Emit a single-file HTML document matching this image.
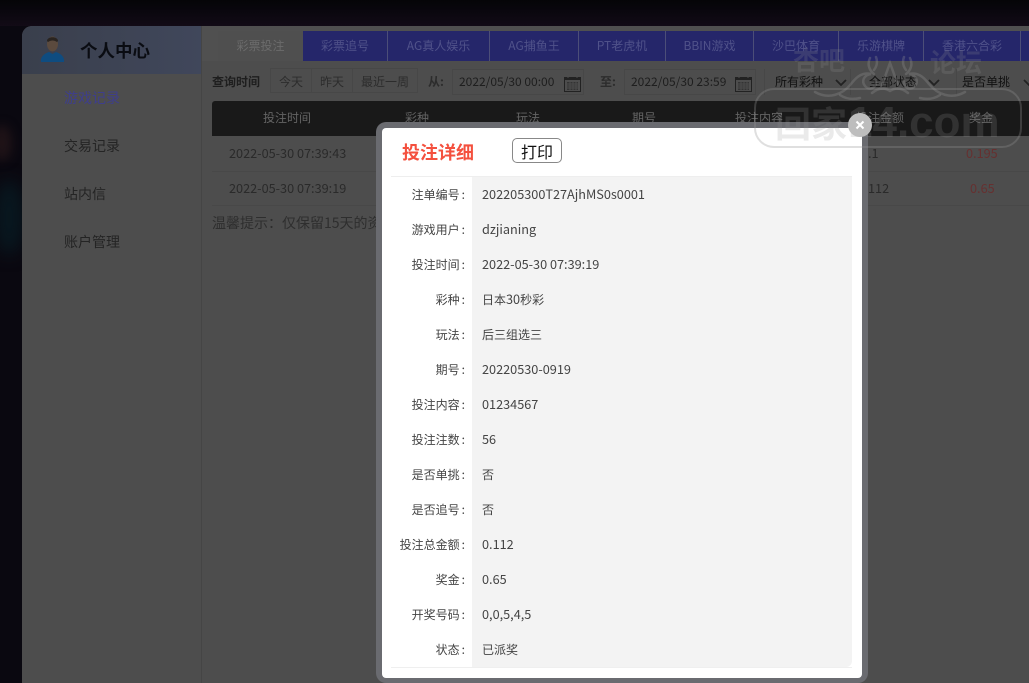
<!DOCTYPE html>
<html><head><meta charset="utf-8">
<style>
html,body{margin:0;padding:0;width:1029px;height:683px;overflow:hidden;background:#0a0810}
*{box-sizing:border-box}
body{position:relative;font-family:"Noto Sans CJK SC","Liberation Sans",sans-serif;}
.a{position:absolute;white-space:nowrap;line-height:1}
.tab{position:absolute;top:31px;height:30px;background:#25266a;color:#50528a;font-size:12px;text-align:center;line-height:30px;border-right:1px solid #4c4e78}
.b{color:#1e1e1e}
.th{position:absolute;top:101px;color:#646464;font-size:12px;line-height:34px;white-space:nowrap;transform:translateX(-50%)}
.lab{position:absolute;left:391px;width:74px;text-align:right;font-size:12px;color:#444;line-height:35px;white-space:nowrap}
.lab i{font-style:normal;margin-left:2px}
.val{position:absolute;left:482px;font-size:12px;color:#444;line-height:35px;white-space:nowrap}
.val b{font-weight:400;font-size:12.700px;line-height:1}
.sel{position:absolute;top:69px;height:26px;font-size:12px;color:#111;line-height:25px}
.nav{position:absolute;left:64px;font-size:14px;line-height:16px;color:#242424;white-space:nowrap}
.wm{color:rgba(150,150,150,.2);font-weight:700}
</style></head><body>
<div class="a" style="left:0;top:0;width:1029px;height:26px;background:linear-gradient(#050507 0,#08060c 8px,#120b16 26px)"></div>
<div class="a" style="left:0;top:26px;width:22px;height:657px;background:#0a0810"></div>
<div class="a" style="left:-8px;top:125px;width:20px;height:36px;border-radius:50%;background:#1f1317;filter:blur(5px)"></div>
<div class="a" style="left:-6px;top:180px;width:30px;height:75px;border-radius:50%;background:#08171f;filter:blur(8px)"></div>

<!-- panel -->
<div class="a" style="left:22px;top:26px;width:1007px;height:657px;background:#4d4d4d;border-top-left-radius:10px;overflow:hidden"></div>
<div class="a" style="left:22px;top:26px;width:180px;height:48px;background:linear-gradient(90deg,#3a3f4c,#40475b);border-top-left-radius:10px"></div>
<div class="a" style="left:201px;top:26px;width:1px;height:657px;background:#454545"></div>
<svg class="a" style="left:38px;top:33px" width="30" height="30" viewBox="0 0 30 30">
<ellipse cx="14.500" cy="11" rx="5.500" ry="7.500" fill="#5b4a3e"/><path d="M9 8c0-5 11-5 11 0l-1 1c-3-2-6-2-9 0z" fill="#2a2420"/>
<path d="M3 29c-1-6 5-9 8-10l3.500 2 3.500-2c3 1 9 4 8 10z" fill="#0f4c80"/></svg>
<div class="a" style="left:80px;top:42px;font-size:17.500px;font-weight:700;color:#0a0c12;line-height:18px">个人中心</div>
<div class="nav" style="top:90px;color:#3e3e8c">游戏记录</div>
<div class="nav" style="top:138px">交易记录</div>
<div class="nav" style="top:186px">站内信</div>
<div class="nav" style="top:234px">账户管理</div>

<!-- tabs -->
<div class="a" style="left:202px;top:26px;width:827px;height:35px;background:#505050"></div>
<div class="a" style="left:218px;top:31px;width:85px;height:30px;background:#4f4f4f;color:#6b6b6b;font-size:12px;text-align:center;line-height:30px">彩票投注</div>
<div class="tab" style="left:303px;width:85px">彩票追号</div>
<div class="tab" style="left:388px;width:102px">AG真人娱乐</div>
<div class="tab" style="left:490px;width:89px">AG捕鱼王</div>
<div class="tab" style="left:579px;width:87px">PT老虎机</div>
<div class="tab" style="left:666px;width:88px">BBIN游戏</div>
<div class="tab" style="left:754px;width:85px">沙巴体育</div>
<div class="tab" style="left:839px;width:85px">乐游棋牌</div>
<div class="tab" style="left:924px;width:97px">香港六合彩</div>
<div class="tab" style="left:1021px;width:8px;border:0"></div>

<!-- filter -->
<div class="a" style="left:212px;top:75px;font-size:12px;font-weight:700;color:#1e1e1e;line-height:14px">查询时间</div>
<div class="a" style="left:270px;top:68px;width:148px;height:25px;border:1px solid #474747"></div>
<div class="a" style="left:311px;top:68px;width:1px;height:25px;background:#474747"></div>
<div class="a" style="left:352px;top:68px;width:1px;height:25px;background:#474747"></div>
<div class="a b" style="left:279px;top:75px;font-size:12px;line-height:14px;color:#2c2c2c">今天</div>
<div class="a b" style="left:320px;top:75px;font-size:12px;line-height:14px;color:#2c2c2c">昨天</div>
<div class="a b" style="left:361px;top:75px;font-size:12px;line-height:14px;color:#2c2c2c">最近一周</div>
<div class="a" style="left:428px;top:75px;font-size:12px;font-weight:700;color:#2c2c2c;line-height:14px">从:</div>
<div class="a" style="left:452px;top:69px;width:132px;height:26px;border:1px solid #474747"></div>
<div class="a" style="left:459px;top:75px;font-size:12px;color:#1e1e1e;line-height:14px">2022/05/30 00:00</div>
<div class="a" style="left:600px;top:75px;font-size:12px;font-weight:700;color:#2c2c2c;line-height:14px">至:</div>
<div class="a" style="left:624px;top:69px;width:132px;height:26px;border:1px solid #474747"></div>
<div class="a" style="left:631px;top:75px;font-size:12px;color:#1e1e1e;line-height:14px">2022/05/30 23:59</div>
<svg class="a" style="left:564px;top:74px" width="17" height="18" viewBox="0 0 17 18"><path d="M.5 3.500h16v14H.5z" fill="none" stroke="#222"/><path d="M1 3h15v3H1z" fill="#222"/><path d="M3 8h11v8H3z" fill="#333"/><path d="M4 1v3M13 1v3M3 10h11M3 12h11M3 14h11M6 8v8M9 8v8M12 8v8" stroke="#4d4d4d"/></svg>
<svg class="a" style="left:735px;top:74px" width="17" height="18" viewBox="0 0 17 18"><path d="M.5 3.500h16v14H.5z" fill="none" stroke="#222"/><path d="M1 3h15v3H1z" fill="#222"/><path d="M3 8h11v8H3z" fill="#333"/><path d="M4 1v3M13 1v3M3 10h11M3 12h11M3 14h11M6 8v8M9 8v8M12 8v8" stroke="#4d4d4d"/></svg>
<div class="sel" style="left:775px">所有彩种</div>
<div class="sel" style="left:869px">全部状态</div>
<div class="sel" style="left:962px">是否单挑</div>
<svg class="a" style="left:830px;top:79px" width="199" height="8" viewBox="0 0 199 8"><path d="M6 1l5 5 5-5M99 1l5 5 5-5M194 1l5 5 5-5" fill="none" stroke="#222" stroke-width="1.800"/></svg>
<div class="a" style="left:764px;top:69px;width:1px;height:26px;background:#474747"></div>
<div class="a" style="left:850px;top:69px;width:1px;height:26px;background:#474747"></div>
<div class="a" style="left:956px;top:69px;width:1px;height:26px;background:#474747"></div>

<!-- table -->
<div class="a" style="left:212px;top:101px;width:817px;height:35px;background:#191919;border-top-left-radius:3px"></div>
<div class="th" style="left:287px">投注时间</div>
<div class="th" style="left:417px">彩种</div>
<div class="th" style="left:528px">玩法</div>
<div class="th" style="left:644px">期号</div>
<div class="th" style="left:759px">投注内容</div>
<div class="th" style="left:880px">投注金额</div>
<div class="th" style="left:981px">奖金</div>
<div class="a" style="left:212px;top:171px;width:817px;height:1px;background:#484848"></div>
<div class="a" style="left:212px;top:205px;width:817px;height:1px;background:#484848"></div>
<div class="a" style="left:229px;top:146px;font-size:12.700px;color:#2a2a2a;line-height:14px">2022-05-30 07:39:43</div>
<div class="a" style="left:229px;top:181px;font-size:12.700px;color:#2a2a2a;line-height:14px">2022-05-30 07:39:19</div>
<div class="a" style="left:868px;top:146px;font-size:12.700px;color:#2a2a2a;line-height:14px">.1</div>
<div class="a" style="left:868px;top:181px;font-size:12.700px;color:#2a2a2a;line-height:14px">112</div>
<div class="a" style="left:966px;top:146px;font-size:12.700px;color:#663030;line-height:14px">0.195</div>
<div class="a" style="left:970px;top:181px;font-size:12.700px;color:#663030;line-height:14px">0.65</div>
<div class="a" style="left:212px;top:215px;font-size:14px;color:#2e2e2e;line-height:16px">温馨提示：仅保留15天的资</div>

<!-- modal -->
<div class="a" style="left:376px;top:122px;width:492px;height:561px;background:#6a6b70;border-radius:10px"></div>
<div class="a" style="left:382px;top:128px;width:480px;height:550px;background:#fff;border-radius:4px"></div>
<div class="a" style="left:402px;top:143px;font-size:18px;font-weight:700;color:#f4503e;line-height:19px">投注详细</div>
<div class="a" style="left:512px;top:138px;width:50px;height:25px;border:1px solid #888;border-radius:5px;background:#fff;color:#111;font-size:16px;line-height:24px;text-align:center">打印</div>
<div class="a" style="left:391px;top:176px;width:461px;height:1px;background:#eeeeee"></div>
<div class="a" style="left:472px;top:177px;width:380px;height:490px;background:#f3f3f3;border-bottom-right-radius:6px"></div>
<div class="a" style="left:391px;top:667px;width:461px;height:1px;background:#efefef"></div>

<div class="lab" style="top:177px">注单编号<i>:</i></div><div class="val" style="top:177px"><b>202205300T27AjhMS0s0001</b></div>
<div class="lab" style="top:212px">游戏用户<i>:</i></div><div class="val" style="top:212px"><b>dzjianing</b></div>
<div class="lab" style="top:247px">投注时间<i>:</i></div><div class="val" style="top:247px"><b>2022-05-30 07:39:19</b></div>
<div class="lab" style="top:282px">彩种<i>:</i></div><div class="val" style="top:282px">日本<b>30</b>秒彩</div>
<div class="lab" style="top:317px">玩法<i>:</i></div><div class="val" style="top:317px">后三组选三</div>
<div class="lab" style="top:352px">期号<i>:</i></div><div class="val" style="top:352px"><b>20220530-0919</b></div>
<div class="lab" style="top:387px">投注内容<i>:</i></div><div class="val" style="top:387px"><b>01234567</b></div>
<div class="lab" style="top:422px">投注注数<i>:</i></div><div class="val" style="top:422px"><b>56</b></div>
<div class="lab" style="top:457px">是否单挑<i>:</i></div><div class="val" style="top:457px">否</div>
<div class="lab" style="top:492px">是否追号<i>:</i></div><div class="val" style="top:492px">否</div>
<div class="lab" style="top:527px">投注总金额<i>:</i></div><div class="val" style="top:527px"><b>0.112</b></div>
<div class="lab" style="top:562px">奖金<i>:</i></div><div class="val" style="top:562px"><b>0.65</b></div>
<div class="lab" style="top:597px">开奖号码<i>:</i></div><div class="val" style="top:597px"><b>0,0,5,4,5</b></div>
<div class="lab" style="top:632px">状态<i>:</i></div><div class="val" style="top:632px">已派奖</div>

<!-- watermark (overlays modal) -->
<div class="a" style="left:754px;top:88px;width:268px;height:60px;border:2px solid rgba(150,150,150,.3);border-radius:20px"></div>
<div class="a wm" style="left:775px;top:103px;font-size:36px;line-height:38px">回家</div>
<div class="a wm" style="left:848px;top:98px;font-size:44px;line-height:50px;font-family:'Liberation Sans',sans-serif">14.com</div>
<div class="a wm" style="left:793px;top:46px;font-size:26px;line-height:28px">杏吧</div>
<div class="a wm" style="left:930px;top:48px;font-size:26px;line-height:28px">论坛</div>
<svg class="a" style="left:810px;top:55px" width="160" height="50" viewBox="0 0 160 50"><g fill="none" stroke="rgba(150,150,150,.3)" stroke-width="2.500" stroke-linecap="round"><path d="M5 37c14 8 28 2 36-8 6-8 12-12 20-10-7 1-10 7-6 12s12 2 11-5"/><path d="M155 37c-14 8-28 2-36-8-6-8-12-12-20-10 7 1 10 7 6 12s-12 2-11-5"/><path d="M30 40c6 4 12 5 20 3M130 40c-6 4-12 5-20 3"/><path d="M60 3c-3 6-1 12 4 16M66 2c2 5 1 9-2 13M100 3c3 6 1 12-4 16M94 2c-2 5-1 9 2 13"/><path d="M72 30c3-8 5-14 8-22 3 8 5 14 8 22M62 38c6-5 12-6 18-2 6-4 12-3 18 2"/></g></svg>

<div class="a" style="left:848px;top:113px;width:24px;height:24px;border-radius:50%;background:#bdbdbd"></div>
<svg class="a" style="left:855px;top:120px" width="10" height="10" viewBox="0 0 10 10"><path d="M1.500 1.500l7 7M8.500 1.500l-7 7" stroke="#fff" stroke-width="2"/></svg>
</body></html>
